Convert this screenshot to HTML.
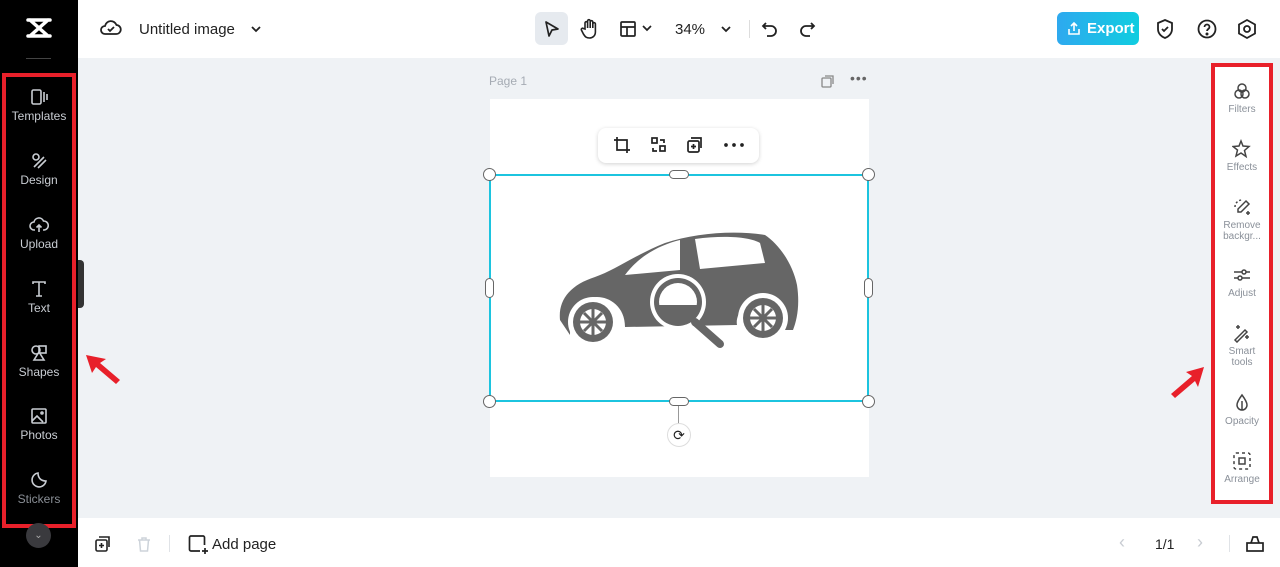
<!DOCTYPE html>
<html><head><meta charset="utf-8"><style>
*{box-sizing:border-box;margin:0;padding:0}
body{width:1280px;height:567px;overflow:hidden;font-family:"Liberation Sans",sans-serif;background:#eff2f5;position:relative}
.abs{position:absolute}
.side{left:0;top:0;width:78px;height:567px;background:#000}
.si{position:absolute;left:0;width:78px;text-align:center;color:#c9cdd3;font-size:12px}
.si svg{display:block;margin:0 auto 2px}
.top{left:78px;top:0;width:1202px;height:58px;background:#fff}
.bot{left:78px;top:518px;width:1202px;height:49px;background:#fff}
.rp{left:1214px;top:66px;width:56px;height:434px;background:#fff}
.ri{position:absolute;left:1211px;width:62px;text-align:center;color:#8a9099;font-size:10px;line-height:11px}
.ri svg{display:block;margin:0 auto 3px}
</style></head><body>
<div class="abs side"></div>
<svg class="abs" style="left:25px;top:16px" width="28" height="24" viewBox="0 0 28 24"><path d="M3 4h22M3 20h22M5 4l18 16M23 4L5 20" stroke="#fff" stroke-width="3.5" fill="none" stroke-linecap="round"/></svg>
<div class="abs" style="left:26px;top:58px;width:25px;height:1px;background:#444"></div>
<div class="abs" style="left:2px;top:73px;width:74px;height:455px;border:4px solid #e8202a"></div>
<div class="si" style="top:87px"><svg width="20" height="20" viewBox="0 0 20 20" fill="none" stroke="#c9cdd3" stroke-width="1.6"><rect x="3" y="3" width="9" height="14" rx="1.5"/><path d="M15 5v10M18 7v6"/></svg>Templates</div>
<div class="si" style="top:151px"><svg width="20" height="20" viewBox="0 0 20 20" fill="none" stroke="#c9cdd3" stroke-width="1.6"><circle cx="7" cy="6" r="3"/><path d="M5 16l10-10M9 17l8-8"/></svg>Design</div>
<div class="si" style="top:215px"><svg width="20" height="20" viewBox="0 0 20 20" fill="none" stroke="#c9cdd3" stroke-width="1.6"><path d="M6 15H5a4 4 0 010-8 5 5 0 019.5-1A4 4 0 0115 15h-1M10 17V10M7.5 12.5L10 10l2.5 2.5"/></svg>Upload</div>
<div class="si" style="top:279px"><svg width="20" height="20" viewBox="0 0 20 20" fill="none" stroke="#c9cdd3" stroke-width="1.6"><path d="M4 5V3h12v2M10 3v14M7 17h6"/></svg>Text</div>
<div class="si" style="top:343px"><svg width="20" height="20" viewBox="0 0 20 20" fill="none" stroke="#c9cdd3" stroke-width="1.6"><circle cx="7" cy="7" r="4"/><rect x="10" y="3" width="7" height="7"/><path d="M10 9l-5 8h10z"/></svg>Shapes</div>
<div class="si" style="top:406px"><svg width="20" height="20" viewBox="0 0 20 20" fill="none" stroke="#c9cdd3" stroke-width="1.6"><rect x="3" y="3" width="14" height="14" rx="1"/><path d="M3 15l5-5 6 6"/><circle cx="13" cy="7" r="1"/></svg>Photos</div>
<div class="si" style="top:470px;color:#8a8f96"><svg width="20" height="20" viewBox="0 0 20 20" fill="none" stroke="#c9cdd3" stroke-width="1.6"><path d="M17 11a7 7 0 11-8-8c0 5 3 8 8 8z"/></svg>Stickers</div>
<div class="abs" style="left:26px;top:523px;width:25px;height:25px;border-radius:50%;background:#3a3a3e;color:#aaa;font-size:10px;text-align:center;line-height:25px">⌄</div>
<div class="abs" style="left:78px;top:260px;width:6px;height:48px;background:#333;border-radius:0 4px 4px 0"></div>

<div class="abs top"></div>
<svg class="abs" style="left:100px;top:18px" width="22" height="20" viewBox="0 0 22 20" fill="none" stroke="#222" stroke-width="1.8"><path d="M6 16H5a4 4 0 010-8 6 6 0 0111.5-1A4.5 4.5 0 0116 16z"/><path d="M8 11l2 2 4-4"/></svg>
<div class="abs" style="left:139px;top:21px;font-size:15px;color:#222">Untitled image</div>
<svg class="abs" style="left:250px;top:24px" width="12" height="10" viewBox="0 0 12 10"><path d="M2 3l4 4 4-4" stroke="#222" stroke-width="1.8" fill="none"/></svg>
<div class="abs" style="left:535px;top:12px;width:33px;height:33px;background:#e6eaef;border-radius:6px"></div>
<svg class="abs" style="left:542px;top:19px" width="20" height="20" viewBox="0 0 20 20"><path d="M4 3l12 7-6 1-3 6z" stroke="#222" stroke-width="1.7" fill="none" stroke-linejoin="round"/></svg>
<svg class="abs" style="left:579px;top:18px" width="20" height="22" viewBox="0 0 20 22" fill="none" stroke="#222" stroke-width="1.6"><path d="M6 11V5a1.3 1.3 0 012.6 0v5V3a1.3 1.3 0 012.6 0v7V4a1.3 1.3 0 012.6 0v6V6a1.3 1.3 0 012.6 0v8c0 4-3 6-6 6s-4-1-6-4l-2-4a1.3 1.3 0 012-1.5z"/></svg>
<svg class="abs" style="left:619px;top:19px" width="40" height="20" viewBox="0 0 40 20" fill="none" stroke="#222" stroke-width="1.7"><rect x="2" y="3" width="14" height="14" rx="1"/><path d="M2 8h14M8 8v9M24 7l4 4 4-4"/></svg>
<div class="abs" style="left:675px;top:21px;font-size:15px;color:#222">34%</div>
<svg class="abs" style="left:720px;top:24px" width="12" height="10" viewBox="0 0 12 10"><path d="M2 3l4 4 4-4" stroke="#222" stroke-width="1.8" fill="none"/></svg>
<div class="abs" style="left:749px;top:20px;width:1px;height:18px;background:#ddd"></div>
<svg class="abs" style="left:760px;top:19px" width="20" height="20" viewBox="0 0 20 20" fill="none" stroke="#222" stroke-width="1.8"><path d="M6 4L3 7l3 3M3 7h8a5 5 0 010 10H7"/></svg>
<svg class="abs" style="left:797px;top:19px" width="20" height="20" viewBox="0 0 20 20" fill="none" stroke="#222" stroke-width="1.8"><path d="M14 4l3 3-3 3M17 7H9a5 5 0 000 10h4"/></svg>
<div class="abs" style="left:1057px;top:12px;width:82px;height:33px;border-radius:6px;background:linear-gradient(90deg,#2ea9ef,#10cde0);color:#fff;font-weight:bold;font-size:15px;line-height:33px;padding-left:30px">Export</div>
<svg class="abs" style="left:1066px;top:20px" width="16" height="16" viewBox="0 0 16 16" fill="none" stroke="#fff" stroke-width="1.6"><path d="M3 9v5h10V9M8 11V3M5 6l3-3 3 3"/></svg>
<svg class="abs" style="left:1154px;top:18px" width="22" height="22" viewBox="0 0 22 22" fill="none" stroke="#222" stroke-width="1.8"><path d="M11 2l7 3v6c0 5-4 8-7 9-3-1-7-4-7-9V5z"/><path d="M8 11l2 2 4-4"/></svg>
<svg class="abs" style="left:1196px;top:18px" width="22" height="22" viewBox="0 0 22 22" fill="none" stroke="#222" stroke-width="1.8"><circle cx="11" cy="11" r="8.5"/><path d="M8.5 9a2.5 2.5 0 115 0c0 2-2.5 2-2.5 4"/><circle cx="11" cy="16" r=".6" fill="#222"/></svg>
<svg class="abs" style="left:1236px;top:18px" width="22" height="22" viewBox="0 0 22 22" fill="none" stroke="#222" stroke-width="1.8"><path d="M11 2l8 4.5v9L11 20l-8-4.5v-9z"/><circle cx="11" cy="11" r="3"/></svg>

<div class="abs" style="left:489px;top:74px;font-size:12px;color:#a5abb3">Page 1</div>
<svg class="abs" style="left:820px;top:73px" width="16" height="16" viewBox="0 0 16 16" fill="none" stroke="#888" stroke-width="1.3"><rect x="2" y="5" width="9" height="9" rx="1"/><path d="M5 3h8v8"/></svg>
<div class="abs" style="left:850px;top:70px;font-size:14px;color:#666;letter-spacing:1px">•••</div>
<div class="abs" style="left:490px;top:99px;width:379px;height:378px;background:#fff"></div>

<svg class="abs" style="left:555px;top:225px" width="245" height="125" viewBox="0 0 245 125">
<path d="M5 95 C3 75 15 60 40 52 C60 45 80 30 110 18 C140 8 180 5 210 10 C225 20 238 40 242 60 C245 80 242 95 238 105 L230 105 C228 85 215 75 205 75 C190 75 180 90 182 100 L70 102 C70 82 55 72 42 72 C25 72 15 85 15 110 Z" fill="#666"/>
<path d="M70 50 C85 30 105 20 125 15 L125 45 Z" fill="#fff"/>
<path d="M140 14 C170 10 195 12 205 18 L210 38 L145 44 Z" fill="#fff"/>
<circle cx="38" cy="97" r="25" fill="#fff"/><circle cx="38" cy="97" r="20" fill="#666"/><circle cx="38" cy="97" r="13" fill="#fff"/><path d="M38 84v26M25 97h26M29 88l18 18M47 88l-18 18" stroke="#666" stroke-width="3"/>
<circle cx="208" cy="93" r="25" fill="#fff"/><circle cx="208" cy="93" r="20" fill="#666"/><circle cx="208" cy="93" r="13" fill="#fff"/><path d="M208 80v26M195 93h26M199 84l18 18M217 84l-18 18" stroke="#666" stroke-width="3"/>
<circle cx="123" cy="77" r="28" fill="#fff"/><circle cx="123" cy="77" r="24" fill="#666"/><circle cx="123" cy="77" r="19" fill="#fff"/><path d="M104 80 h38 a19 19 0 01-38 0z" fill="#666"/>
<path d="M140 97l25 22" stroke="#666" stroke-width="8" stroke-linecap="round"/>
</svg>

<div class="abs" style="left:489px;top:174px;width:380px;height:228px;border:2px solid #1cc4df"></div>
<div class="abs" style="left:483px;top:168px;width:13px;height:13px;border-radius:50%;background:#fff;border:1px solid #666"></div>
<div class="abs" style="left:862px;top:168px;width:13px;height:13px;border-radius:50%;background:#fff;border:1px solid #666"></div>
<div class="abs" style="left:483px;top:395px;width:13px;height:13px;border-radius:50%;background:#fff;border:1px solid #666"></div>
<div class="abs" style="left:862px;top:395px;width:13px;height:13px;border-radius:50%;background:#fff;border:1px solid #666"></div>
<div class="abs" style="left:669px;top:170px;width:20px;height:9px;border-radius:5px;background:#fff;border:1px solid #666"></div>
<div class="abs" style="left:669px;top:397px;width:20px;height:9px;border-radius:5px;background:#fff;border:1px solid #666"></div>
<div class="abs" style="left:485px;top:278px;width:9px;height:20px;border-radius:5px;background:#fff;border:1px solid #666"></div>
<div class="abs" style="left:864px;top:278px;width:9px;height:20px;border-radius:5px;background:#fff;border:1px solid #666"></div>
<div class="abs" style="left:678px;top:406px;width:1px;height:18px;background:#999"></div>
<div class="abs" style="left:667px;top:423px;width:24px;height:24px;border-radius:50%;background:#fff;border:1px solid #ddd;text-align:center;line-height:22px;font-size:14px;color:#222">⟳</div>

<div class="abs" style="left:598px;top:128px;width:161px;height:35px;background:#fff;border-radius:8px;box-shadow:0 1px 4px rgba(0,0,0,.18)"></div>
<svg class="abs" style="left:612px;top:135px" width="140" height="20" viewBox="0 0 140 20" fill="none" stroke="#222" stroke-width="1.7"><path d="M5 2v13h13M2 5h13v13"/><rect x="40" y="3" width="5" height="5"/><rect x="48" y="11" width="5" height="5"/><path d="M48 5h4v3M45 16h-4v-3"/><rect x="76" y="6" width="11" height="11" rx="1.5"/><path d="M79 3h10v10M81.5 9v5M79 11.5h5"/><circle cx="114" cy="10" r="1" fill="#222"/><circle cx="122" cy="10" r="1" fill="#222"/><circle cx="130" cy="10" r="1" fill="#222"/></svg>

<div class="abs rp"></div>
<div class="abs" style="left:1211px;top:63px;width:62px;height:441px;border:4px solid #e8202a"></div>
<div class="ri" style="top:81px"><svg width="20" height="20" viewBox="0 0 20 20" fill="none" stroke="#444" stroke-width="1.5"><circle cx="10" cy="7" r="4"/><circle cx="7" cy="13" r="4"/><circle cx="13" cy="13" r="4"/></svg>Filters</div>
<div class="ri" style="top:139px"><svg width="20" height="20" viewBox="0 0 20 20" fill="none" stroke="#444" stroke-width="1.5"><path d="M9 2l2 5 6 .5-4.5 4 1.5 6L9 14l-5 3 1.5-6L1 7.5 7 7z"/></svg>Effects</div>
<div class="ri" style="top:197px"><svg width="20" height="20" viewBox="0 0 20 20" fill="none" stroke="#444" stroke-width="1.5"><path d="M3 10a7 7 0 017-7" stroke-dasharray="2 2"/><path d="M14 4l3 3-8 8H6v-3z"/><path d="M16 14v4M14 16h4"/></svg>Remove<br>backgr...</div>
<div class="ri" style="top:265px"><svg width="20" height="20" viewBox="0 0 20 20" fill="none" stroke="#444" stroke-width="1.5"><path d="M2 7h16M2 13h16"/><circle cx="12" cy="7" r="2" fill="#fff"/><circle cx="8" cy="13" r="2" fill="#fff"/></svg>Adjust</div>
<div class="ri" style="top:323px"><svg width="20" height="20" viewBox="0 0 20 20" fill="none" stroke="#444" stroke-width="1.5"><path d="M3 17l10-10 2 2-10 10zM6 2v4M4 4h4M15 12v4M13 14h4"/></svg>Smart<br>tools</div>
<div class="ri" style="top:393px"><svg width="20" height="20" viewBox="0 0 20 20" fill="none" stroke="#444" stroke-width="1.5"><path d="M10 2c3 4 5 7 5 10a5 5 0 01-10 0c0-3 2-6 5-10zM10 8v9"/></svg>Opacity</div>
<div class="ri" style="top:451px"><svg width="20" height="20" viewBox="0 0 20 20" fill="none" stroke="#444" stroke-width="1.5"><rect x="2" y="2" width="16" height="16" rx="2" stroke-dasharray="3 3"/><rect x="7" y="7" width="6" height="6"/></svg>Arrange</div>

<svg class="abs" style="left:82px;top:352px" width="40" height="36" viewBox="0 0 40 36"><path d="M4 3l6 18 4-6 20 17 4-4L18 11l6-4z" fill="#e8202a"/></svg>
<svg class="abs" style="left:1168px;top:364px" width="40" height="36" viewBox="0 0 40 36"><path d="M36 3L18 8l6 4L3 30l4 4 20-17 3 6z" fill="#e8202a"/></svg>

<div class="abs bot"></div>
<svg class="abs" style="left:94px;top:535px" width="18" height="18" viewBox="0 0 18 18" fill="none" stroke="#222" stroke-width="1.6"><rect x="2" y="5" width="11" height="11" rx="1.5"/><path d="M5 2h10v10M7.5 8v5M5 10.5h5"/></svg>
<svg class="abs" style="left:136px;top:535px" width="16" height="18" viewBox="0 0 16 18" fill="none" stroke="#cdd3da" stroke-width="1.5"><path d="M2 5h12M6 5V3h4v2M3.5 5l1 11h7l1-11"/></svg>
<div class="abs" style="left:169px;top:535px;width:1px;height:17px;background:#e0e3e7"></div>
<svg class="abs" style="left:187px;top:533px" width="22" height="22" viewBox="0 0 22 22" fill="none" stroke="#222" stroke-width="1.7"><path d="M13 18H4a1.5 1.5 0 01-1.5-1.5v-12A1.5 1.5 0 014 3h12a1.5 1.5 0 011.5 1.5V12M18 15v6M15 18h6"/></svg>
<div class="abs" style="left:212px;top:536px;font-size:15px;color:#222">Add page</div>
<div class="abs" style="left:1119px;top:532px;font-size:18px;color:#c8ccd2">‹</div>
<div class="abs" style="left:1155px;top:536px;font-size:14px;color:#222">1/1</div>
<div class="abs" style="left:1197px;top:532px;font-size:18px;color:#c8ccd2">›</div>
<div class="abs" style="left:1229px;top:535px;width:1px;height:17px;background:#e0e3e7"></div>
<svg class="abs" style="left:1245px;top:533px" width="20" height="20" viewBox="0 0 20 20" fill="none" stroke="#222" stroke-width="1.7"><rect x="2" y="10" width="16" height="8"/><path d="M6 10l2-6h4l2 6"/></svg>
</body></html>
